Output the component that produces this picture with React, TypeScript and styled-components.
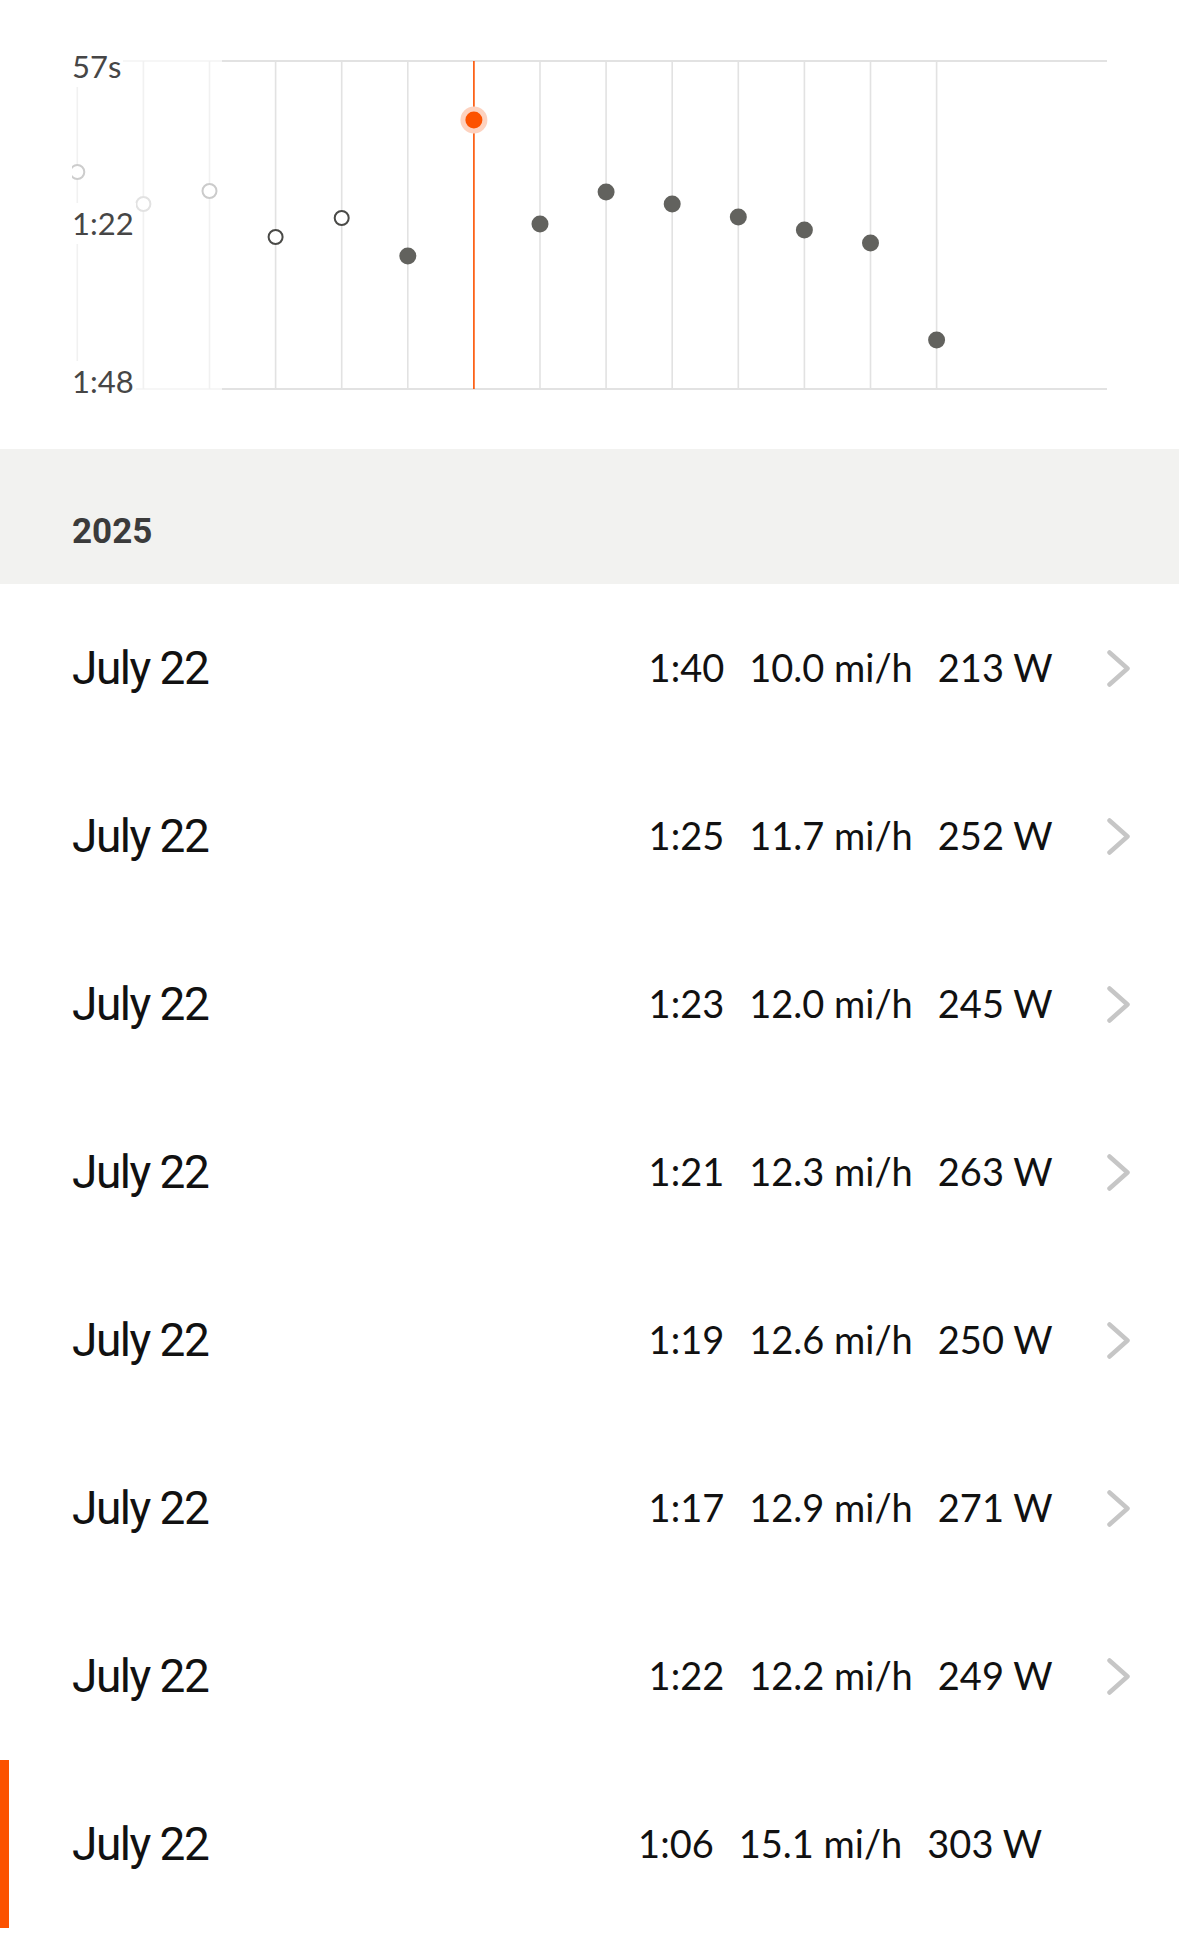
import React from "react";
import styled, { createGlobalStyle } from "styled-components";

const GlobalStyle = createGlobalStyle`
  html, body { margin: 0; padding: 0; background: #ffffff; }
  body { font-family: "Roboto", "Liberation Sans", sans-serif; -webkit-font-smoothing: antialiased; }
  * { box-sizing: border-box; }
`;

const ORANGE = "#fc5200";

const Page = styled.div`
  width: 100%;
  background: #ffffff;
`;

const ChartSection = styled.section`
  position: relative;
  height: 449px;
  padding-left: 72px;
  overflow: hidden;
`;

const ChartSvg = styled.svg`
  display: block;
`;

const AxisLabels = styled.div`
  position: absolute;
  left: 72px;
  top: 45.6px;
  height: 356.5px;
  display: flex;
  flex-direction: column;
  justify-content: space-between;
  align-items: flex-start;
  pointer-events: none;
`;

const AxisLabel = styled.span`
  display: block;
  background: #ffffff;
  padding: 5px 2px 5px 0;
  font-family: "Lato", "Liberation Sans", sans-serif;
  font-size: 31px;
  line-height: 31px;
  color: #464646;
`;

const YearHeader = styled.div`
  height: 135px;
  background: #f2f2f0;
  padding: 65px 0 0 72px;
  font-family: "Roboto", "Liberation Sans", sans-serif;
  font-weight: 700;
  font-size: 35px;
  line-height: 35px;
  color: #3b3b3b;
`;

const List = styled.div`
  display: flex;
  flex-direction: column;
`;

const Row = styled.div<{ $selected?: boolean }>`
  height: 168px;
  display: flex;
  align-items: center;
  padding: 0 49px 0 72px;
  box-shadow: ${(p) => (p.$selected ? `inset 9px 0 0 ${ORANGE}` : "none")};
`;

const DateText = styled.span`
  margin-right: auto;
  font-family: "Roboto", "Liberation Sans", sans-serif;
  font-size: 46px;
  line-height: 46px;
  letter-spacing: -1.5px;
  color: #111111;
`;

const Stats = styled.div<{ $selected?: boolean }>`
  display: flex;
  gap: 25px;
  margin-right: ${(p) => (p.$selected ? "88px" : "0")};
  margin-bottom: 2px;
  font-family: "Lato", "Liberation Sans", sans-serif;
  font-size: 38px;
  line-height: 38px;
  color: #111111;
  white-space: nowrap;
`;

const Chevron = styled.svg`
  display: block;
  margin-left: 54.5px;
  flex: none;
`;

type Dot = { y: number; kind: "ghost" | "hollow" | "filled" | "active"; color?: string };

const COL_X0 = 77.3;
const COL_STEP = 66.1;
const TOP = 61;
const BOTTOM = 389;

const dots: Dot[] = [
  { y: 172, kind: "ghost", color: "#cdcdcd" },
  { y: 204, kind: "ghost", color: "#e2e2e2" },
  { y: 191, kind: "ghost", color: "#cbcbcb" },
  { y: 237, kind: "hollow" },
  { y: 218, kind: "hollow" },
  { y: 256, kind: "filled" },
  { y: 120, kind: "active" },
  { y: 224, kind: "filled" },
  { y: 192, kind: "filled" },
  { y: 204, kind: "filled" },
  { y: 217, kind: "filled" },
  { y: 230, kind: "filled" },
  { y: 243, kind: "filled" },
  { y: 340, kind: "filled" },
];

const efforts = [
  { date: "July 22", time: "1:40", speed: "10.0 mi/h", power: "213 W" },
  { date: "July 22", time: "1:25", speed: "11.7 mi/h", power: "252 W" },
  { date: "July 22", time: "1:23", speed: "12.0 mi/h", power: "245 W" },
  { date: "July 22", time: "1:21", speed: "12.3 mi/h", power: "263 W" },
  { date: "July 22", time: "1:19", speed: "12.6 mi/h", power: "250 W" },
  { date: "July 22", time: "1:17", speed: "12.9 mi/h", power: "271 W" },
  { date: "July 22", time: "1:22", speed: "12.2 mi/h", power: "249 W" },
  { date: "July 22", time: "1:06", speed: "15.1 mi/h", power: "303 W", selected: true },
];

function Chart() {
  return (
    <ChartSection>
      <ChartSvg width={1107} height={449} viewBox="72 0 1107 449">
        <line x1={72} y1={TOP} x2={222} y2={TOP} stroke="#f6f6f6" strokeWidth={2} />
        <line x1={72} y1={BOTTOM} x2={222} y2={BOTTOM} stroke="#f6f6f6" strokeWidth={2} />
        <line x1={222} y1={TOP} x2={1107} y2={TOP} stroke="#e2e2e2" strokeWidth={2} />
        <line x1={222} y1={BOTTOM} x2={1107} y2={BOTTOM} stroke="#e2e2e2" strokeWidth={2} />
        {dots.map((d, i) => {
          const x = COL_X0 + i * COL_STEP;
          const stroke = d.kind === "active" ? ORANGE : d.kind === "ghost" ? "#f1f1f1" : "#e2e2e2";
          return <line key={`v${i}`} x1={x} y1={TOP} x2={x} y2={BOTTOM} stroke={stroke} strokeWidth={1.6} />;
        })}
        {dots.map((d, i) => {
          const x = COL_X0 + i * COL_STEP;
          if (d.kind === "active") {
            return (
              <g key={`d${i}`}>
                <circle cx={x} cy={d.y} r={13.5} fill="#fdd2bf" />
                <circle cx={x} cy={d.y} r={8.5} fill={ORANGE} />
              </g>
            );
          }
          if (d.kind === "filled") {
            return <circle key={`d${i}`} cx={x} cy={d.y} r={8.5} fill="#62625e" />;
          }
          const c = d.kind === "ghost" ? d.color : "#4a4a47";
          return <circle key={`d${i}`} cx={x} cy={d.y} r={7} fill="#ffffff" stroke={c} strokeWidth={2} />;
        })}
      </ChartSvg>
      <AxisLabels>
        <AxisLabel>57s</AxisLabel>
        <AxisLabel>1:22</AxisLabel>
        <AxisLabel>1:48</AxisLabel>
      </AxisLabels>
    </ChartSection>
  );
}

export default function App() {
  return (
    <Page>
      <GlobalStyle />
      <Chart />
      <YearHeader>2025</YearHeader>
      <List>
        {efforts.map((e, i) => (
          <Row key={i} $selected={e.selected}>
            <DateText>{e.date}</DateText>
            <Stats $selected={e.selected}>
              <span>{e.time}</span>
              <span>{e.speed}</span>
              <span>{e.power}</span>
            </Stats>
            {!e.selected && (
              <Chevron width={23} height={37} viewBox="0 0 23 37">
                <polyline
                  points="2.5,2.5 20.5,18.5 2.5,34.5"
                  fill="none"
                  stroke="#c6c6c6"
                  strokeWidth={4.5}
                  strokeLinecap="round"
                  strokeLinejoin="round"
                />
              </Chevron>
            )}
          </Row>
        ))}
      </List>
    </Page>
  );
}
